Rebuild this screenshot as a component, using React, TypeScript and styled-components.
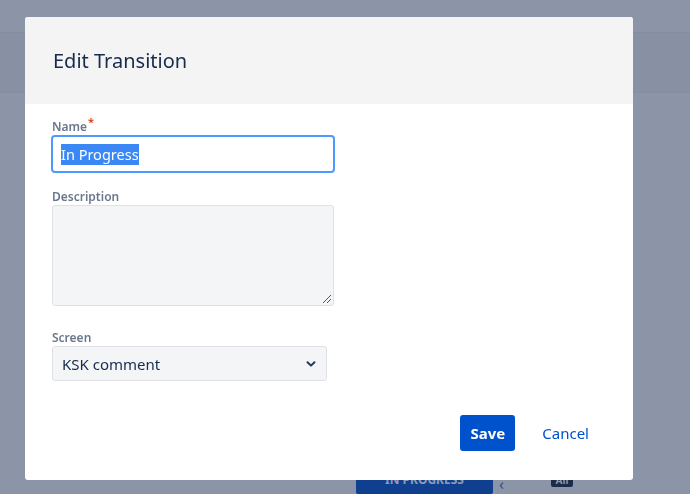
import React from 'react'
import styled, { createGlobalStyle } from 'styled-components'

const GlobalStyle = createGlobalStyle`
  html, body { margin: 0; padding: 0; }
  body {
    font-family: "Noto Sans", "Open Sans", sans-serif;
    background: #8b95a7;
    width: 690px;
    height: 494px;
    overflow: hidden;
  }
  * { box-sizing: border-box; }
`

const Page = () => (
  <SPage>
    <STopGap />
    <SHeaderBand />
    <SCanvas>
      <SBoardRow>
        <SStatusButton>IN PROGRESS</SStatusButton>
        <SArrow>‹</SArrow>
        <SAllTag>All</SAllTag>
      </SBoardRow>
    </SCanvas>
  </SPage>
)

const App = () => {
  return (
    <>
      <GlobalStyle />
      <Page />
      <SModal>
        <SModalHeader>
          <STitle>Edit Transition</STitle>
        </SModalHeader>
        <SModalBody>
          <SField>
            <SLabel>
              Name<SRequired>*</SRequired>
            </SLabel>
            <SFocusedInput>
              <SSelected>In Progress</SSelected>
            </SFocusedInput>
          </SField>
          <SField>
            <SLabel>Description</SLabel>
            <STextarea />
          </SField>
          <SField $gapTop={8}>
            <SLabel>Screen</SLabel>
            <SSelect>
              <span>KSK comment</span>
              <svg width="12" height="12" viewBox="0 0 12 12">
                <path d="M2.5 4.2 L6 7.6 L9.5 4.2" fill="none" stroke="#253858" strokeWidth="2" strokeLinecap="round" strokeLinejoin="round" />
              </svg>
            </SSelect>
          </SField>
        </SModalBody>
        <SFooter>
          <SSaveButton>Save</SSaveButton>
          <SCancel>Cancel</SCancel>
        </SFooter>
      </SModal>
    </>
  )
}

const SPage = styled.div`
  display: flex;
  flex-direction: column;
  height: 494px;
`
const STopGap = styled.div`
  height: 32px;
`
const SHeaderBand = styled.div`
  height: 61px;
  background: #8791a3;
  border-top: 1px solid #848ea0;
  border-bottom: 1px solid #848ea0;
`
const SCanvas = styled.div`
  flex: 1;
  display: flex;
  flex-direction: column;
  justify-content: flex-end;
`
const SBoardRow = styled.div`
  display: flex;
  align-items: flex-start;
  padding-left: 356px;
  height: 14px;
  overflow: hidden;
`
const SStatusButton = styled.div`
  width: 137px;
  height: 30px;
  margin-top: -16px;
  background: #0f3f8e;
  color: #8d9bb8;
  font-size: 12px;
  font-weight: 700;
  display: flex;
  align-items: center;
  justify-content: center;
  border-radius: 2px;
`
const SArrow = styled.div`
  color: #2c4f94;
  font-size: 16px;
  line-height: 16px;
  margin: -4px 0 0 6px;
`
const SAllTag = styled.div`
  margin: -6px 0 0 47px;
  width: 22px;
  height: 13px;
  background: #1c2b4a;
  color: #8b95a7;
  font-size: 10px;
  font-weight: 700;
  line-height: 12px;
  text-align: center;
  border-radius: 2px;
`

const SModal = styled.div`
  position: fixed;
  left: 25px;
  top: 17px;
  width: 608px;
  height: 463px;
  background: #fff;
  border-radius: 3px;
  display: flex;
  flex-direction: column;
  overflow: hidden;
`
const SModalHeader = styled.div`
  height: 87px;
  background: #f4f4f4;
  padding: 29px 28px 0;
`
const STitle = styled.h1`
  margin: 0;
  font-size: 20px;
  font-weight: 400;
  color: #172b4d;
  line-height: 30px;
`
const SModalBody = styled.div`
  padding: 15px 26px 0;
  display: flex;
  flex-direction: column;
  gap: 16px;
`
const SField = styled.div<{ $gapTop?: number }>`
  display: flex;
  flex-direction: column;
  align-items: flex-start;
  margin-top: ${(p) => p.$gapTop || 0}px;
`
const SLabel = styled.label`
  font-size: 12px;
  font-weight: 600;
  color: #6b778c;
  line-height: 16px;
  margin-left: 1px;
  position: relative;
`
const SRequired = styled.span`
  color: #de350b;
  font-size: 11px;
  position: relative;
  top: -5px;
  margin-left: 1px;
`
const SFocusedInput = styled.div`
  width: 284px;
  height: 38px;
  border: 2px solid #4c9aff;
  border-radius: 4px;
  background: #fff;
  display: flex;
  align-items: center;
  padding-left: 8px;
  font-size: 14.5px;
  color: #172b4d;
`
const SSelected = styled.span`
  background: #3a87f6;
  color: #fff;
  line-height: 21px;
`
const STextarea = styled.div`
  margin-left: 1px;
  width: 282px;
  height: 101px;
  background: #f4f5f7;
  border: 1px solid #dfe1e6;
  border-radius: 3px;
  position: relative;
  &::after {
    content: '';
    position: absolute;
    right: 2px;
    bottom: 2px;
    width: 8px;
    height: 8px;
    background: linear-gradient(135deg, transparent 45%, #555 45%, #555 55%, transparent 55%, transparent 70%, #555 70%, #555 80%, transparent 80%);
  }
`
const SSelect = styled.div`
  margin-left: 1px;
  width: 275px;
  height: 35px;
  background: #f4f5f7;
  border: 1px solid #dfe1e6;
  border-radius: 3px;
  display: flex;
  align-items: center;
  justify-content: space-between;
  padding: 0 9px 0 9px;
  font-size: 15px;
  color: #172b4d;
`
const SFooter = styled.div`
  margin-top: auto;
  margin-bottom: 29px;
  display: flex;
  justify-content: flex-end;
  align-items: center;
  padding-right: 44px;
  gap: 27px;
`
const SSaveButton = styled.button`
  width: 55px;
  height: 36px;
  background: #0052cc;
  color: #fff;
  border: none;
  border-radius: 3px;
  font-family: inherit;
  font-size: 15px;
  font-weight: 700;
`
const SCancel = styled.a`
  color: #0052cc;
  font-size: 15px;
  cursor: pointer;
`

export default App
